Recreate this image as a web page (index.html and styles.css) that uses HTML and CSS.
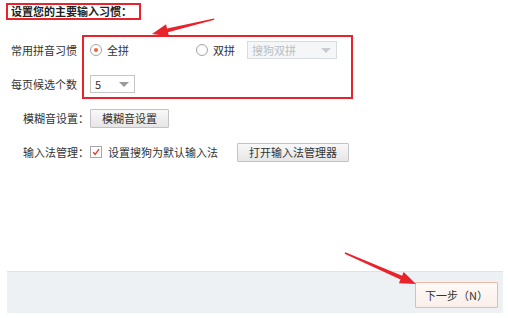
FILE: index.html
```html
<!DOCTYPE html>
<html lang="zh-CN">
<head>
<meta charset="utf-8">
<title>设置输入习惯</title>
<link rel="stylesheet" href="styles.css">
</head>
<body>
<div class="page">
  <div class="title">设置您的主要输入习惯：</div>

  <div class="form">
    <div class="label">常用拼音习惯</div>
    <div class="ctrl">
      <span class="opt opt-first"><span class="radio checked"></span>全拼</span>
      <span class="opt"><span class="radio"></span>双拼</span>
      <span class="select select-wide disabled"><span class="select-text">搜狗双拼</span><span class="caret"></span></span>
    </div>

    <div class="label">每页候选个数</div>
    <div class="ctrl">
      <span class="select select-small"><span class="select-text">5</span><span class="caret"></span></span>
    </div>

    <div class="label label-right">模糊音设置：</div>
    <div class="ctrl">
      <button class="btn btn-fuzzy">模糊音设置</button>
    </div>

    <div class="label label-right">输入法管理：</div>
    <div class="ctrl">
      <span class="check">
        <svg viewBox="0 0 12 12" width="12" height="12"><path d="M2.6 6.2 L5 8.8 L9.6 2.6" fill="none" stroke="#e5412b" stroke-width="1.7"/></svg>
      </span>
      <span class="check-text">设置搜狗为默认输入法</span>
      <button class="btn btn-manager">打开输入法管理器</button>
    </div>
  </div>

  <div class="footer">
    <button class="next">下一步（N）</button>
  </div>

  <div class="mark-box"></div>
  <svg class="arrows" viewBox="0 0 508 318" width="508" height="318">
    <polygon points="214,18.4 167,28.4 166.1,24.3 152,34 168.9,36.3 168,32.3 214.3,19.8" fill="#e8232b"/>
    <polygon points="344.6,253.7 400.5,279.4 398.9,283.3 416,284 403.7,271.9 402.1,275.8 345.3,252.3" fill="#e8232b"/>
  </svg>
</div>
</body>
</html>
```

FILE: styles.css
```css
* { box-sizing: border-box; }

html, body {
  margin: 0;
  padding: 0;
  background: #ffffff;
}

body {
  font-family: "Noto Sans CJK SC", "Liberation Sans", sans-serif;
  font-size: 11px;
  color: #333333;
}

.page {
  position: relative;
  width: 508px;
  height: 318px;
  display: flex;
  flex-direction: column;
  overflow: hidden;
}

.title {
  align-self: flex-start;
  margin: 3px 0 0 6px;
  height: 17px;
  line-height: 13px;
  padding: 0 7px 0 3px;
  border: 2px solid #e8232b;
  font-weight: bold;
  color: #222;
  white-space: nowrap;
}

.form {
  margin-top: 20px;
  padding-left: 11px;
  display: grid;
  grid-template-columns: 79px auto;
  grid-auto-rows: 20px;
  row-gap: 14px;
  align-items: center;
}

.label {
  white-space: nowrap;
  line-height: 20px;
}

.label-right {
  justify-self: end;
  padding-right: 1px;
}

.ctrl {
  display: flex;
  align-items: center;
  height: 20px;
  white-space: nowrap;
}

.opt {
  display: flex;
  align-items: center;
}

.opt-first {
  width: 106px;
}

.radio {
  position: relative;
  width: 12px;
  height: 12px;
  border: 1px solid #a3a3a3;
  border-radius: 50%;
  background: #fff;
  margin-right: 5px;
  flex: none;
}

.radio.checked::after {
  content: "";
  position: absolute;
  left: 3px;
  top: 3px;
  width: 4px;
  height: 4px;
  border-radius: 50%;
  background: #f06436;
}

.select {
  position: relative;
  display: flex;
  align-items: center;
  height: 18px;
  border: 1px solid #c6c6c6;
  background: #fff;
}

.select-small {
  width: 45px;
}

.select-wide {
  width: 90px;
  margin-left: 12px;
}

.select-text {
  padding-left: 4px;
  flex: 1;
}

.select.disabled {
  background: #f4f6f8;
  border-color: #d7dce1;
  color: #b9bec5;
}

.caret {
  width: 0;
  height: 0;
  border-left: 5px solid transparent;
  border-right: 5px solid transparent;
  border-top: 5px solid #9a9a9a;
  margin-right: 5px;
}

.select.disabled .caret {
  border-top-color: #c8ccd1;
}

.btn {
  font-family: inherit;
  font-size: 11px;
  color: #333;
  height: 19px;
  padding: 0;
  border: 1px solid #c3c3c3;
  background: linear-gradient(#f8f8f8, #e6e6e6);
  border-radius: 1px;
  line-height: 17px;
}

.btn-fuzzy {
  width: 79px;
}

.btn-manager {
  width: 112px;
  margin-left: 19px;
}

.check {
  width: 12px;
  height: 12px;
  border: 1px solid #a8a8a8;
  background: #fff;
  display: flex;
  align-items: center;
  justify-content: center;
  margin-right: 6px;
  flex: none;
}

.check svg {
  display: block;
}

.footer {
  margin: auto 5px 5px 7px;
  height: 42px;
  border-top: 1px solid #dfe2e6;
  background: #eef1f4;
  display: flex;
  justify-content: flex-end;
  align-items: flex-start;
  padding: 10px 5px 0 0;
}

.next {
  font-family: inherit;
  font-size: 11px;
  color: #333;
  width: 83px;
  height: 26px;
  padding: 0;
  border: 1px solid #efb7a6;
  background: linear-gradient(#fefaf8, #fbeee9);
  border-radius: 1px;
}

.mark-box {
  position: absolute;
  left: 82px;
  top: 35px;
  width: 271px;
  height: 64px;
  border: 2px solid #e8232b;
  pointer-events: none;
}

.arrows {
  position: absolute;
  left: 0;
  top: 0;
  pointer-events: none;
}
```
